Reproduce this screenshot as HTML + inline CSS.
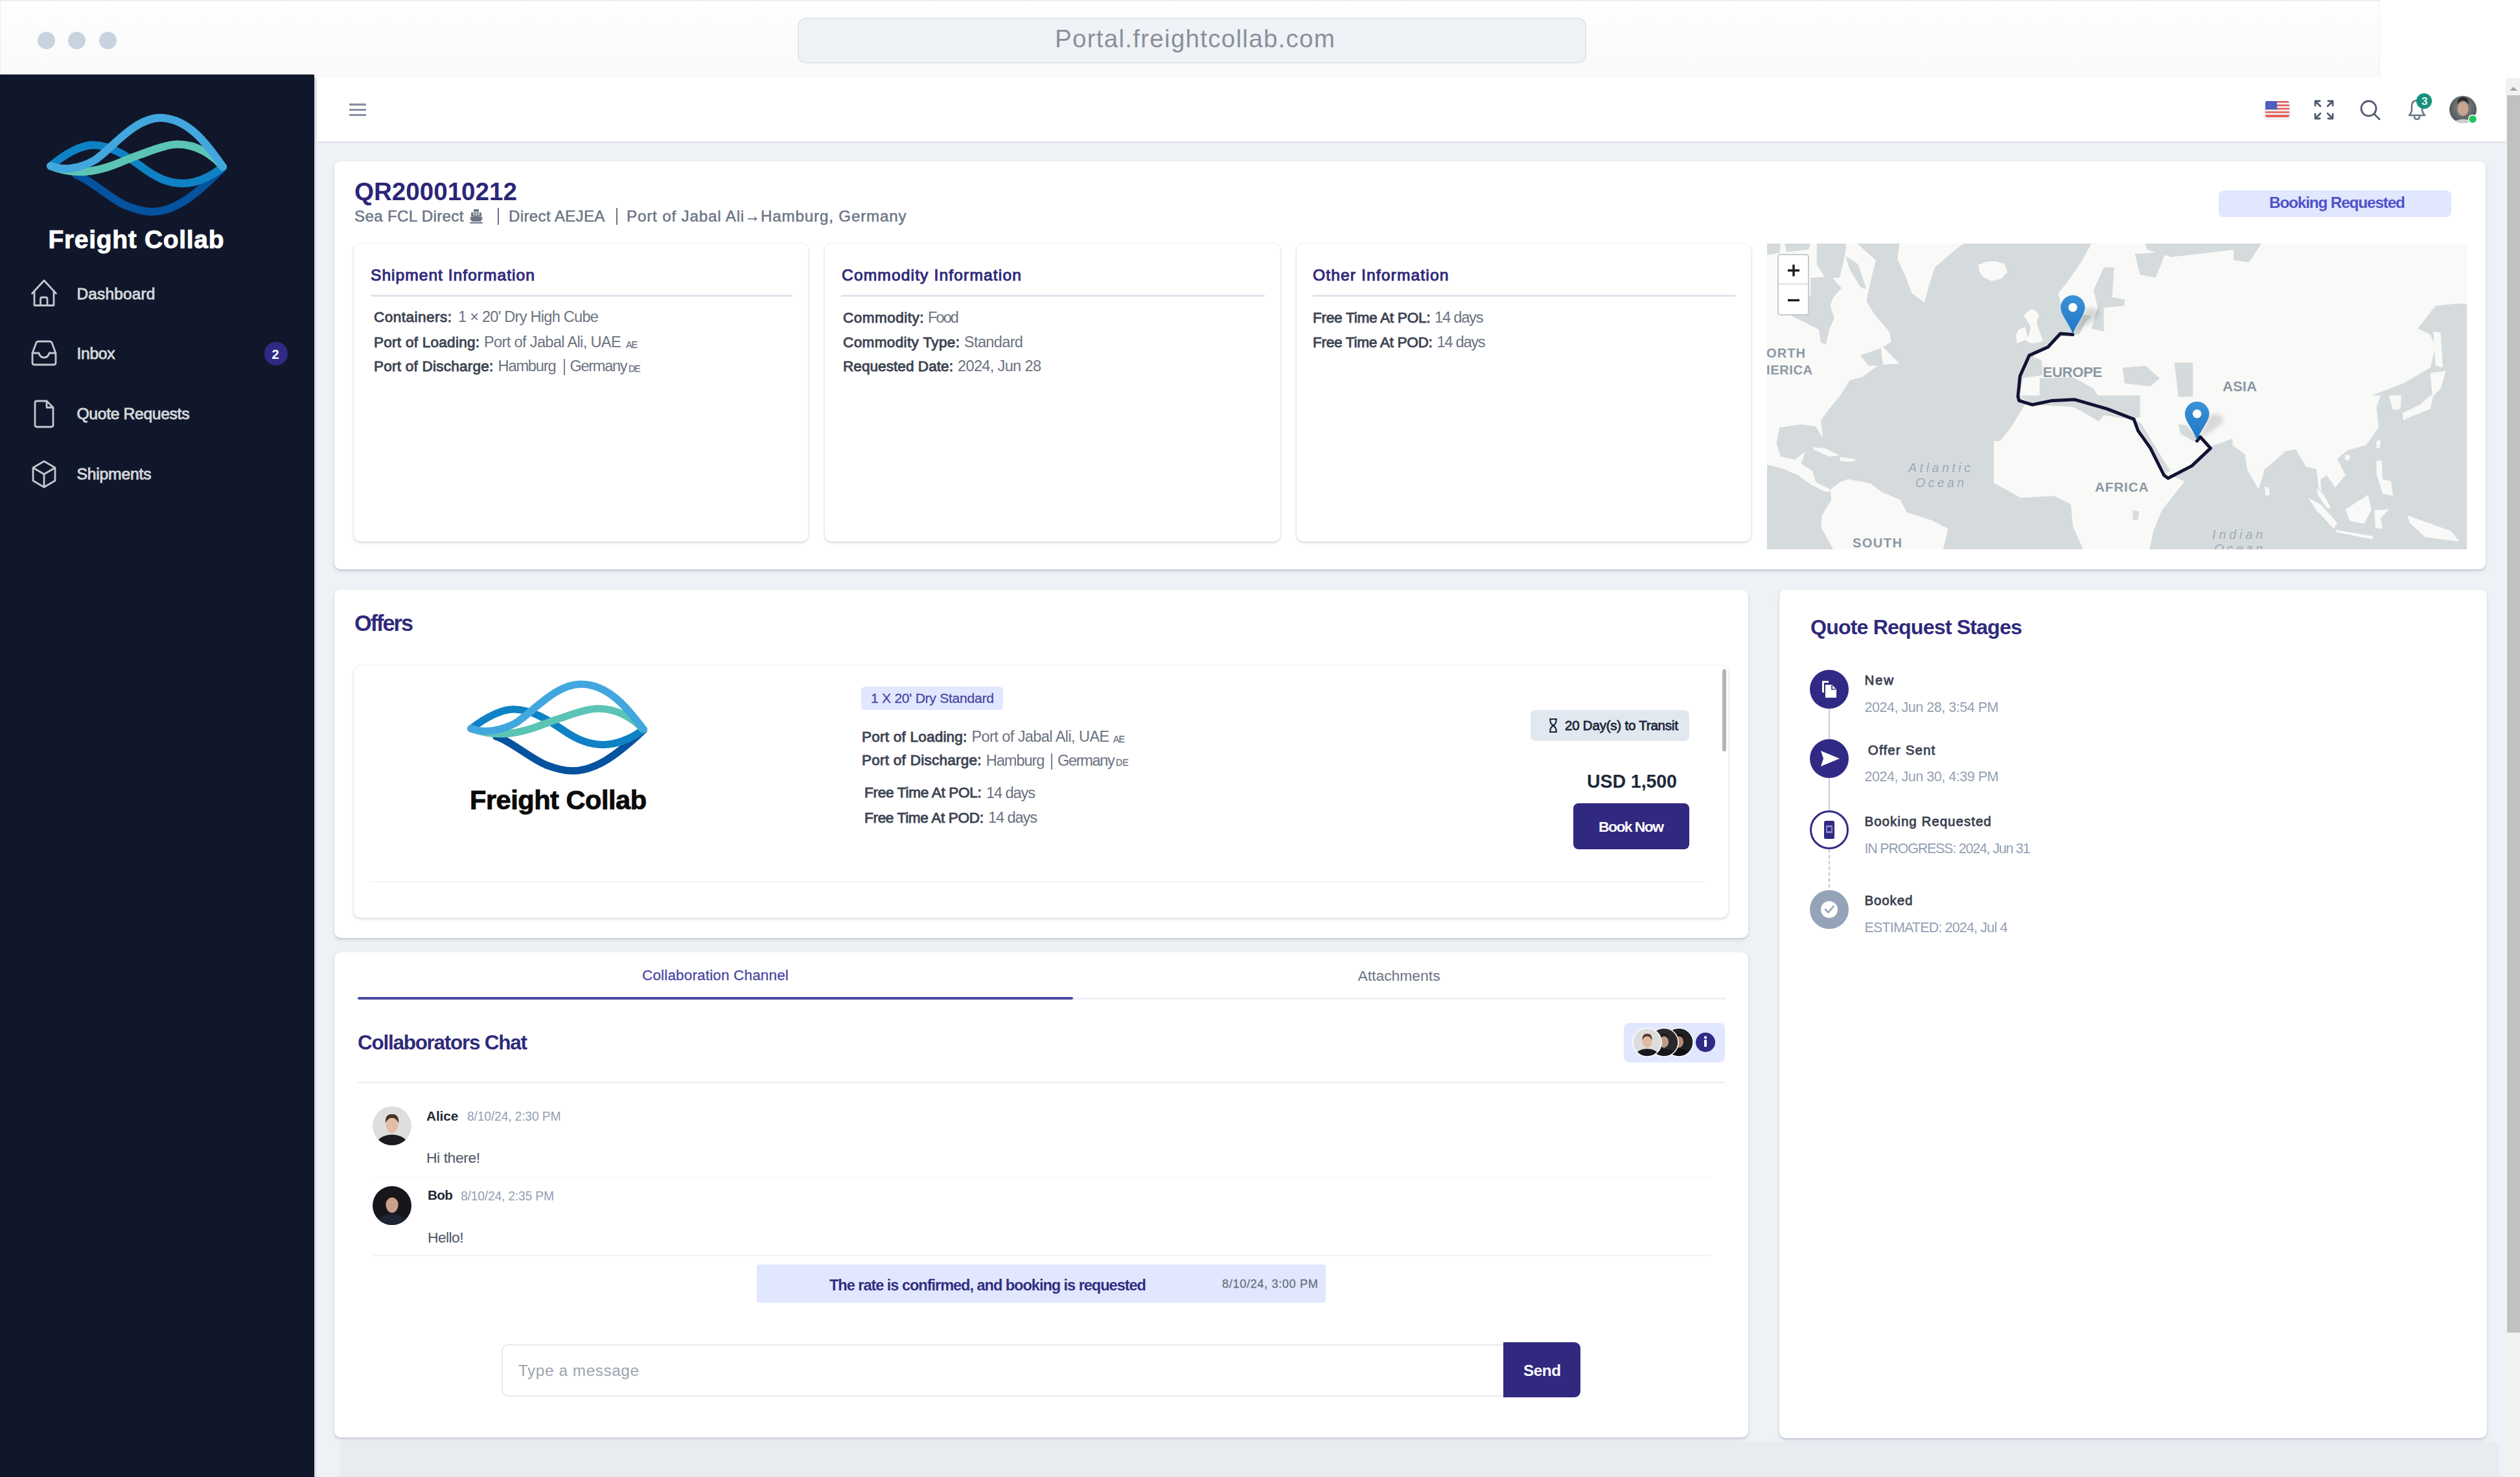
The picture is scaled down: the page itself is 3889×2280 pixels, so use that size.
<!DOCTYPE html>
<html><head><meta charset="utf-8"><title>Freight Collab</title>
<style>
html,body{margin:0;padding:0;width:3889px;height:2280px;overflow:hidden;background:#eef2f7;}
.t{position:absolute;white-space:nowrap;line-height:1;font-family:"Liberation Sans",sans-serif;}
.r{position:absolute;}
</style></head><body>
<div class="r" style="left:485.0px;top:120.0px;width:3382.0px;height:2160.0px;background:#eef2f7;"></div>
<div class="r" style="left:524.0px;top:2226.0px;width:3333.0px;height:54.0px;background:#e8ebf0;"></div>
<div class="r" style="left:0.0px;top:0.0px;width:3673.0px;height:120.0px;background:linear-gradient(180deg,#fefefe,#fafafb);border-top:2px solid #eceef1;border-left:1px solid #eef0f3;border-right:1px solid #eef0f3;box-sizing:border-box;"></div>
<div class="r" style="left:3673.0px;top:0.0px;width:216.0px;height:121.0px;background:#ffffff;"></div>
<div class="r" style="left:57.5px;top:48.5px;width:27.0px;height:27.0px;background:#c9d3e0;border-radius:50%;"></div>
<div class="r" style="left:104.5px;top:48.5px;width:27.0px;height:27.0px;background:#c9d3e0;border-radius:50%;"></div>
<div class="r" style="left:152.5px;top:48.5px;width:27.0px;height:27.0px;background:#c9d3e0;border-radius:50%;"></div>
<div class="r" style="left:1231.0px;top:27.0px;width:1217.0px;height:71.0px;background:#eff3f8;border:2px solid #e1e6ed;border-radius:13px;box-sizing:border-box;"></div>
<div class="t" style="left:1628.0px;top:41.2px;font-size:38.57px;color:#8b909a;letter-spacing:1.26px;">Portal.freightcollab.com</div>
<div class="r" style="left:3867.0px;top:121.0px;width:22.0px;height:2159.0px;background:#f1f1f1;"></div>
<div class="r" style="left:3869.0px;top:147.0px;width:20.0px;height:1910.0px;background:#c1c1c1;"></div>
<svg class="r" style="left:3869px;top:128px" width="20" height="16"><path d="M4 12 L10 6 L16 12 Z" fill="#a3a3a3"/></svg>
<div class="r" style="left:485.0px;top:120.0px;width:3382.0px;height:98.0px;background:#ffffff;"></div>
<div class="r" style="left:485.0px;top:218.0px;width:3382.0px;height:3.0px;background:#e3e8ef;"></div>
<div class="r" style="left:0.0px;top:115.0px;width:485.0px;height:2165.0px;background:#10172a;"></div>
<div class="r" style="left:485.0px;top:120.0px;width:4.0px;height:2160.0px;background:linear-gradient(90deg,#c9ccd2,#eef2f7);"></div>
<svg class="r" style="left:60px;top:160px" width="300" height="180" viewBox="0 0 2462 1477" preserveAspectRatio="none"><g fill="none" stroke-width="100" stroke-linecap="round">
<path d="M470,900 C650,960 900,1200 1100,1290 C1250,1350 1350,1370 1420,1370 C1700,1370 1950,1200 2330,810" stroke="#05529f" />
<path d="M150,790 C350,620 550,520 700,525 C900,530 1100,650 1300,800 C1500,950 1650,1010 1820,1010 C2050,1010 2250,870 2330,800" stroke="#0e82c5" />
<path d="M150,790 C300,850 450,870 600,860 C900,830 1100,700 1300,640 C1500,560 1650,515 1760,515 C2000,515 2200,650 2330,800" stroke="#5cc4b4" />
<path d="M150,790 C300,850 500,830 700,720 C900,600 1200,180 1540,180 C1900,180 2150,540 2330,800" stroke="#42a7de" />
</g></svg>
<div class="t" style="left:74.5px;top:349.9px;font-size:39.00px;color:#ffffff;font-weight:bold;letter-spacing:0.68px;-webkit-text-stroke:0.9px #fff;">Freight Collab</div>
<div class="t" style="left:118.5px;top:441.8px;font-size:24.40px;color:#d4d7dd;-webkit-text-stroke:0.9px #d4d7dd;letter-spacing:0.20px;">Dashboard</div>
<div class="t" style="left:118.5px;top:534.0px;font-size:24.69px;color:#d4d7dd;-webkit-text-stroke:0.9px #d4d7dd;letter-spacing:-0.35px;">Inbox</div>
<div class="t" style="left:118.5px;top:627.0px;font-size:24.69px;color:#d4d7dd;-webkit-text-stroke:0.9px #d4d7dd;letter-spacing:-0.34px;">Quote Requests</div>
<div class="t" style="left:118.5px;top:720.0px;font-size:24.69px;color:#d4d7dd;-webkit-text-stroke:0.9px #d4d7dd;letter-spacing:-0.20px;">Shipments</div>
<svg class="r" style="left:40px;top:420px" width="60" height="350" viewBox="40 420 60 350" fill="none" stroke="#c3c7ce" stroke-width="2.8" stroke-linejoin="round" stroke-linecap="round">
<path d="M49.5,453 L68,433 L86.5,453 M53,449 L53,471.5 L83,471.5 L83,449 M62.5,471.5 L62.5,461.5 Q62.5,459 65,459 L70.5,459 Q73,459 73,461.5 L73,471.5"/>
<path d="M50,545 L56,529 Q57,527 59.5,527 L76.5,527 Q79,527 80,529 L86,545 L86,560 Q86,563 83,563 L53,563 Q50,563 50,560 Z M50,545 L60,545 Q62,552 68,552 Q74,552 76,545 L86,545"/>
<path d="M54,622 Q54,619 57,619 L72,619 L82,629 L82,656 Q82,659 79,659 L57,659 Q54,659 54,656 Z M72,619 L72,629 L82,629"/>
<path d="M68,712 L85,722 L85,742 L68,752 L51,742 L51,722 Z M51,722 L68,732 L85,722 M68,732 L68,752"/>
</svg>
<div class="r" style="left:408.4px;top:528.4px;width:35.2px;height:35.2px;background:#2f2a85;border-radius:50%;"></div>
<div class="t" style="left:419.5px;top:537.0px;font-size:20.00px;color:#ffffff;font-weight:bold;">2</div>
<svg class="r" style="left:530px;top:150px" width="45" height="40" viewBox="530 150 45 40" stroke="#8591a2" stroke-width="3.2" stroke-linecap="butt"><path d="M539,161.3 H565 M539,169.5 H565 M539,177.5 H565"/></svg>
<svg class="r" style="left:3490px;top:150px" width="50" height="40" viewBox="3490 150 50 40">
<defs><clipPath id="fc"><rect x="3496" y="156" width="37" height="25" rx="3"/></clipPath></defs>
<rect x="3494" y="158" width="41" height="27" rx="4" fill="#000" opacity="0.06"/>
<g clip-path="url(#fc)"><rect x="3496" y="156" width="37" height="25" fill="#f4f4f6"/>
<rect x="3496" y="156" width="37" height="2.6" fill="#e45b5b"/><rect x="3496" y="161.3" width="37" height="2.6" fill="#e45b5b"/>
<rect x="3496" y="166.6" width="37" height="2.6" fill="#e45b5b"/><rect x="3496" y="171.9" width="37" height="2.6" fill="#e45b5b"/>
<rect x="3496" y="177.2" width="37" height="3.8" fill="#e45b5b"/><rect x="3496" y="156" width="18" height="13" fill="#4d5fbf"/></g></svg>
<svg class="r" style="left:3565px;top:148px" width="45" height="45" viewBox="3565 148 45 45" fill="none" stroke="#505c70" stroke-width="2.8" stroke-linecap="round" stroke-linejoin="round">
<path d="M3573,156 L3581,164 M3573,156 L3573,163 M3573,156 L3580,156"/>
<path d="M3600,156 L3592,164 M3600,156 L3600,163 M3600,156 L3593,156"/>
<path d="M3573,183 L3581,175 M3573,183 L3573,176 M3573,183 L3580,183"/>
<path d="M3600,183 L3592,175 M3600,183 L3600,176 M3600,183 L3593,183"/>
</svg>
<svg class="r" style="left:3635px;top:148px" width="45" height="45" viewBox="3635 148 45 45" fill="none" stroke="#505c70" stroke-width="2.8" stroke-linecap="round">
<circle cx="3655.5" cy="167.5" r="11.5"/><path d="M3664,176 L3672,184"/></svg>
<svg class="r" style="left:3705px;top:145px" width="60" height="50" viewBox="3705 145 60 50" fill="none" stroke="#6b7689" stroke-width="2.6" stroke-linecap="round" stroke-linejoin="round">
<path d="M3718,178 Q3722,174 3722,168 L3722,164 Q3722,155 3730,155 Q3738,155 3738,164 L3738,168 Q3738,174 3742,178 Z M3726,180 Q3726,184 3730,184 Q3734,184 3734,180"/>
</svg>
<div class="r" style="left:3729.0px;top:144.0px;width:24.0px;height:24.0px;background:#16917f;border-radius:50%;"></div>
<div class="t" style="left:3737.0px;top:147.9px;font-size:17.14px;color:#e8f5f2;font-weight:bold;">3</div>
<svg class="r" style="left:3775px;top:143px" width="52" height="52" viewBox="3775 143 52 52">
<defs><clipPath id="av"><circle cx="3801" cy="169" r="21"/></clipPath><radialGradient id="avg" cx="0.5" cy="0.45" r="0.6"><stop offset="0" stop-color="#8a8f92"/><stop offset="1" stop-color="#3d4144"/></radialGradient></defs>
<g clip-path="url(#av)"><rect x="3775" y="143" width="52" height="52" fill="url(#avg)"/>
<ellipse cx="3801" cy="168" rx="8.5" ry="11" fill="#c7a58f"/><path d="M3792,161 Q3793,150 3801,150 Q3810,150 3810,161 Q3806,155 3801,155 Q3796,155 3792,161 Z" fill="#2b2725"/>
<ellipse cx="3801" cy="193" rx="17" ry="9" fill="#c9d1d6"/></g>
<circle cx="3816" cy="184" r="6.5" fill="#22c55e" stroke="#fff" stroke-width="1.5"/></svg>
<div class="r" style="left:516.0px;top:249.0px;width:3320.0px;height:630.0px;background:#fff;border-radius:10px;box-shadow:0 2px 3px rgba(30,40,60,0.16),0 4px 8px rgba(30,40,60,0.06),0 0 1px rgba(30,40,60,0.08);"></div>
<div class="t" style="left:547.0px;top:277.2px;font-size:38.57px;color:#2b2679;font-weight:bold;">QR200010212</div>
<div class="t" style="left:547.0px;top:321.5px;font-size:24.14px;color:#6b7585;-webkit-text-stroke:0.5px #6b7585;letter-spacing:0.34px;">Sea FCL Direct</div>
<svg class="r" style="left:722px;top:322px" width="26" height="24" viewBox="0 0 26 24"><g fill="#6b7585">
<rect x="9" y="1" width="8" height="4" rx="1"/><path d="M5,6 H21 V13 L13,10 L5,13 Z"/><path d="M3,14 L13,10.5 L23,14 L20,20 H6 Z"/><rect x="3" y="21" width="20" height="2" rx="1"/></g>
<g fill="#fff"><rect x="8" y="7.5" width="2.5" height="2"/><rect x="12" y="7.5" width="2.5" height="2"/><rect x="16" y="7.5" width="2.5" height="2"/></g></svg>
<div class="r" style="left:767.5px;top:321.0px;width:2.5px;height:26.0px;background:#6b7585;"></div>
<div class="t" style="left:785.0px;top:321.5px;font-size:24.14px;color:#6b7585;-webkit-text-stroke:0.5px #6b7585;letter-spacing:0.33px;">Direct AEJEA</div>
<div class="r" style="left:950.5px;top:321.0px;width:2.5px;height:26.0px;background:#6b7585;"></div>
<div class="t" style="left:967.0px;top:321.5px;font-size:24.14px;color:#6b7585;-webkit-text-stroke:0.5px #6b7585;letter-spacing:0.85px;">Port of Jabal Ali→Hamburg, Germany</div>
<div class="r" style="left:3424.0px;top:294.0px;width:359.0px;height:41.0px;background:#e0e7ff;border-radius:8px;"></div>
<div class="t" style="left:3502.0px;top:301.4px;font-size:24.29px;color:#4f52c9;font-weight:bold;letter-spacing:-1.13px;">Booking Requested</div>
<div class="r" style="left:546.0px;top:376.0px;width:701.0px;height:460.0px;background:#fff;border-radius:10px;box-shadow:0 2px 4px rgba(30,40,60,0.15),0 0 3px rgba(30,40,60,0.10);"></div>
<div class="r" style="left:1273.0px;top:376.0px;width:703.0px;height:460.0px;background:#fff;border-radius:10px;box-shadow:0 2px 4px rgba(30,40,60,0.15),0 0 3px rgba(30,40,60,0.10);"></div>
<div class="r" style="left:2001.0px;top:376.0px;width:701.0px;height:460.0px;background:#fff;border-radius:10px;box-shadow:0 2px 4px rgba(30,40,60,0.15),0 0 3px rgba(30,40,60,0.10);"></div>
<div class="t" style="left:572.0px;top:412.6px;font-size:24.57px;color:#2e2a7a;-webkit-text-stroke:1.0px #2e2a7a;letter-spacing:1.02px;">Shipment Information</div>
<div class="r" style="left:572.0px;top:455.0px;width:651.0px;height:3.0px;background:#dfe5ee;"></div>
<div class="t" style="left:1299.0px;top:413.1px;font-size:24.57px;color:#2e2a7a;-webkit-text-stroke:1.0px #2e2a7a;letter-spacing:1.15px;">Commodity Information</div>
<div class="r" style="left:1298.0px;top:455.0px;width:654.0px;height:3.0px;background:#dfe5ee;"></div>
<div class="t" style="left:2026.0px;top:413.1px;font-size:24.57px;color:#2e2a7a;-webkit-text-stroke:1.0px #2e2a7a;letter-spacing:1.14px;">Other Information</div>
<div class="r" style="left:2026.0px;top:455.0px;width:652.0px;height:3.0px;background:#dfe5ee;"></div>
<div class="t" style="left:577.0px;top:478.8px;font-size:22.54px;color:#3d4452;-webkit-text-stroke:0.9px #3d4452;letter-spacing:0.47px;">Containers:</div>
<div class="t" style="left:707.0px;top:478.0px;font-size:23.57px;color:#6b7280;letter-spacing:-0.74px;">1 × 20' Dry High Cube</div>
<div class="t" style="left:577.0px;top:517.8px;font-size:22.54px;color:#3d4452;-webkit-text-stroke:0.9px #3d4452;letter-spacing:0.26px;">Port of Loading:</div>
<div class="t" style="left:747.0px;top:517.0px;font-size:23.57px;color:#6b7280;letter-spacing:-0.65px;">Port of Jabal Ali, UAE</div>
<div class="t" style="left:966.0px;top:524.9px;font-size:14.27px;color:#6b7280;-webkit-text-stroke:0.3px #6b7280;letter-spacing:-1.04px;">AE</div>
<div class="t" style="left:577.0px;top:554.8px;font-size:22.54px;color:#3d4452;-webkit-text-stroke:0.9px #3d4452;letter-spacing:0.23px;">Port of Discharge:</div>
<div class="t" style="left:768.6px;top:554.0px;font-size:23.57px;color:#6b7280;letter-spacing:-1.16px;">Hamburg</div>
<div class="r" style="left:869.5px;top:554.0px;width:2.0px;height:25.0px;background:#7b8290;"></div>
<div class="t" style="left:879.4px;top:554.0px;font-size:23.57px;color:#6b7280;letter-spacing:-1.29px;">Germany</div>
<div class="t" style="left:970.0px;top:561.9px;font-size:14.23px;color:#6b7280;-webkit-text-stroke:0.3px #6b7280;letter-spacing:-1.17px;">DE</div>
<div class="t" style="left:1301.0px;top:479.8px;font-size:22.54px;color:#3d4452;-webkit-text-stroke:0.9px #3d4452;letter-spacing:0.47px;">Commodity:</div>
<div class="t" style="left:1432.0px;top:479.0px;font-size:23.57px;color:#6b7280;letter-spacing:-1.91px;">Food</div>
<div class="t" style="left:1301.0px;top:517.8px;font-size:22.54px;color:#3d4452;-webkit-text-stroke:0.9px #3d4452;letter-spacing:0.36px;">Commodity Type:</div>
<div class="t" style="left:1488.0px;top:517.0px;font-size:23.57px;color:#6b7280;letter-spacing:-0.67px;">Standard</div>
<div class="t" style="left:1301.0px;top:554.8px;font-size:22.54px;color:#3d4452;-webkit-text-stroke:0.9px #3d4452;letter-spacing:0.06px;">Requested Date:</div>
<div class="t" style="left:1478.0px;top:554.0px;font-size:23.57px;color:#6b7280;letter-spacing:-0.66px;">2024, Jun 28</div>
<div class="t" style="left:2026.0px;top:479.8px;font-size:22.54px;color:#3d4452;-webkit-text-stroke:0.9px #3d4452;letter-spacing:-0.24px;">Free Time At POL:</div>
<div class="t" style="left:2214.0px;top:479.0px;font-size:23.57px;color:#6b7280;letter-spacing:-1.18px;">14 days</div>
<div class="t" style="left:2026.0px;top:517.8px;font-size:22.54px;color:#3d4452;-webkit-text-stroke:0.9px #3d4452;letter-spacing:-0.27px;">Free Time At POD:</div>
<div class="t" style="left:2217.5px;top:517.0px;font-size:23.57px;color:#6b7280;letter-spacing:-1.23px;">14 days</div>
<svg class="r" style="left:2727px;top:376px" width="1080" height="472" viewBox="0 0 1080 472">
<defs><linearGradient id="pg" x1="0" y1="0" x2="0" y2="1"><stop offset="0" stop-color="#3d93d8"/><stop offset="1" stop-color="#1c74c6"/></linearGradient>
<filter id="blr" x="-50%" y="-50%" width="200%" height="200%"><feGaussianBlur stdDeviation="3"/></filter></defs>
<rect width="1080" height="472" fill="#d5dadd"/>
<polygon points="0.0,0.0 76.7,0.0 76.7,32.0 89.5,52.7 111.9,52.7 121.4,12.8 121.4,0.0 139.0,0.0 167.8,25.6 156.6,71.9 153.4,89.5 167.8,111.9 188.6,135.8 191.8,151.8 179.0,159.8 204.5,185.4 172.6,187.0 147.0,206.1 127.8,210.9 111.9,236.0 0.0,236.0" fill="#f9f9f7"/><polygon points="67.1,52.7 99.1,51.1 115.1,68.7 102.3,83.1 97.5,95.9 103.9,115.1 95.9,132.6 91.1,155.0 83.1,153.4 79.9,132.6 63.9,124.6 38.4,111.9 52.7,95.9 67.1,79.9" fill="#d5dadd"/><polygon points="143.8,172.6 175.8,161.4 179.0,188.6 156.6,188.6" fill="#d5dadd"/><polygon points="0.0,0.0 20.8,0.0 19.2,14.4 0.0,17.6" fill="#d5dadd"/><polygon points="27.2,0.0 67.1,0.0 63.9,9.6 30.4,12.8" fill="#d5dadd"/><polygon points="121.4,19.2 140.6,32.0 153.4,70.3 143.8,67.1 127.8,39.9" fill="#d5dadd"/><polygon points="204.5,0.0 303.6,0.0 292.4,8.0 258.9,36.8 249.3,67.1 242.9,91.1 223.7,76.7 212.5,47.9 201.3,24.0" fill="#f9f9f7"/><polygon points="0.0,236.0 111.9,236.0 95.9,255.2 83.1,272.8 86.3,299.9 75.1,282.3 52.7,279.1 19.2,283.9 14.4,307.9 20.8,328.7 43.1,333.5 59.1,320.7 52.7,339.9 70.3,351.1 75.1,368.6 95.9,378.2 97.5,383.0 89.5,383.0 67.1,371.8 47.9,357.4 20.8,346.3 0.0,341.5" fill="#f9f9f7"/><polygon points="70.3,314.3 89.5,315.9 111.9,327.1 95.9,328.7 73.5,319.1" fill="#f9f9f7"/><polygon points="111.9,329.5 137.4,332.7 132.6,336.7 113.5,335.9" fill="#f9f9f7"/><polygon points="97.5,379.8 111.9,368.6 124.6,363.8 159.8,370.2 175.8,383.0 206.1,395.8 215.7,415.0 255.7,427.8 279.6,440.5 271.7,472.5 102.3,472.5 83.1,437.3 84.7,419.8 99.1,395.8" fill="#f9f9f7"/><rect x="350" y="0" width="370" height="472" fill="#f9f9f7"/><polygon points="345.6,0.0 500.6,0.0 484.6,28.8 462.3,60.7 449.5,76.7 455.9,102.3 500.6,111.9 491.0,121.4 481.4,140.6 449.5,143.8 428.7,159.8 407.9,169.4 412.7,175.8 423.9,180.6 425.5,202.9 395.2,207.7 388.8,236.5 345.6,236.5" fill="#d5dadd"/><polygon points="503.8,71.9 519.8,36.8 535.8,36.8 532.6,83.1 551.8,86.3 551.8,95.9 519.8,99.1 519.8,135.8 500.6,131.0 510.2,99.1" fill="#d5dadd"/><polygon points="567.7,16.0 615.7,12.8 599.7,52.7 575.7,47.9" fill="#d5dadd"/><polygon points="583.7,0.0 721.1,0.0 721.1,9.6 623.7,20.8 586.9,9.6" fill="#d5dadd"/><polygon points="420.7,207.7 471.9,206.1 503.8,223.7 511.8,236.5 420.7,236.5" fill="#d5dadd"/><polygon points="548.6,191.8 583.7,188.6 606.1,207.7 591.7,220.5 551.8,215.7" fill="#d5dadd"/><polygon points="628.5,183.8 657.2,183.8 657.2,236.5 634.8,236.5" fill="#d5dadd"/><polygon points="326.0,33.0 338.0,28.0 352.0,27.0 366.0,31.0 371.0,44.0 362.0,54.0 347.0,58.0 334.0,52.0 328.0,44.0" fill="#f9f9f7"/><polygon points="407.0,101.0 414.0,103.0 420.0,111.0 416.0,122.0 418.0,129.0 426.0,150.0 418.0,153.0 407.0,154.0 398.5,149.0 405.0,138.0 407.0,129.0 401.0,118.0 396.0,111.0" fill="#f9f9f7"/><polygon points="388.0,133.0 398.5,128.6 401.0,140.0 400.7,147.8 386.0,154.0 384.0,142.0" fill="#f9f9f7"/><polygon points="345.6,234.4 388.8,234.4 399.9,245.6 376.0,283.9 360.0,304.7 345.6,304.7" fill="#d5dadd"/><polygon points="345.6,367.0 392.0,392.6 443.1,389.4 468.7,402.2 471.9,435.7 487.8,472.5 345.6,472.5" fill="#d5dadd"/><polygon points="388.8,234.4 575.7,234.4 575.7,268.0 559.7,271.2 519.8,264.8 511.8,274.4 487.8,260.0 471.9,252.0 407.9,248.8 399.9,242.4" fill="#d5dadd"/><polygon points="567.7,272.8 577.3,277.5 622.1,351.1 615.7,354.2" fill="#d5dadd"/><polygon points="634.8,279.1 647.6,280.7 666.8,303.1 660.4,306.3 638.0,293.5" fill="#d5dadd"/><polygon points="622.1,357.4 655.6,344.7 686.0,312.7 721.1,299.9 721.1,472.5 590.1,472.5 596.5,443.7 609.3,411.8 644.4,367.0" fill="#d5dadd"/><polygon points="564.5,411.8 574.1,413.4 572.5,426.2 564.5,426.2" fill="#d5dadd"/><rect x="720" y="0" width="360" height="236" fill="#f9f9f7"/><polygon points="1063.6,92.7 1081.1,92.7 1081.1,236.5 927.7,236.5 982.1,215.7 1023.6,191.8 1031.6,159.8 1023.6,140.6 1004.4,131.0 1031.6,95.9" fill="#d5dadd"/><polygon points="1028.4,135.8 1039.6,137.4 1042.8,191.8 1031.6,188.6" fill="#f9f9f7"/><polygon points="1023.6,199.7 1047.6,196.5 1039.6,223.7 1026.8,236.5" fill="#f9f9f7"/><polygon points="720.0,0.0 763.1,0.0 744.0,28.8 720.0,25.6" fill="#d5dadd"/><rect x="720" y="236" width="360" height="236" fill="#d5dadd"/><polygon points="718.4,234.4 946.9,234.4 940.5,252.0 943.7,283.9 924.5,311.1 895.8,319.1 879.8,331.9 892.6,357.4 876.6,376.6 863.8,357.4 854.2,363.8 855.8,387.8 870.2,408.6 863.8,395.8 851.0,376.6 847.8,347.9 831.9,344.7 815.9,317.5 799.9,320.7 772.7,344.7 767.9,347.9 758.4,379.8 740.8,347.9 737.6,325.5 718.4,311.1" fill="#f9f9f7"/><polygon points="959.7,234.4 978.9,234.4 977.3,255.2 966.1,256.8" fill="#f9f9f7"/><polygon points="982.1,272.8 980.5,261.6 1007.6,248.8 1023.6,234.4 1028.4,234.4 1023.6,255.2 991.7,268.0" fill="#f9f9f7"/><polygon points="940.5,304.7 946.9,303.1 945.3,315.9 940.5,315.9" fill="#f9f9f7"/><polygon points="767.9,375.0 774.3,376.6 775.9,387.8 769.5,389.4" fill="#f9f9f7"/><polygon points="835.1,392.6 855.8,403.8 879.8,431.0 875.0,440.5 847.8,411.8" fill="#f9f9f7"/><polygon points="878.2,442.1 935.7,451.7 934.1,456.5 878.2,445.3" fill="#f9f9f7"/><polygon points="892.6,410.2 927.7,387.8 932.5,411.8 921.3,432.5 899.0,427.8" fill="#f9f9f7"/><polygon points="937.3,411.8 959.7,410.2 946.9,424.6 950.1,440.5 938.9,438.9" fill="#f9f9f7"/><polygon points="940.5,335.1 948.5,335.1 950.1,363.8 962.9,367.0 966.1,389.4 950.1,386.2 940.5,355.8" fill="#f9f9f7"/><polygon points="988.5,419.8 1055.6,443.7 1068.4,459.7 1015.6,453.3 991.7,431.0" fill="#f9f9f7"/><polygon points="892.6,325.5 900.6,327.1 897.4,335.1 891.8,333.5" fill="#f9f9f7"/><polygon points="847.8,376.6 859.0,387.8 870.2,408.6 863.8,408.6 851.0,389.4" fill="#f9f9f7"/>
<text x="-1" y="176" textLength="60" lengthAdjust="spacing" font-family="Liberation Sans" font-weight="bold" font-size="20.1" fill="#8b97a4" stroke="#ffffff" stroke-opacity="0.35" stroke-width="1" paint-order="stroke">ORTH</text><text x="-1" y="202" textLength="71" lengthAdjust="spacing" font-family="Liberation Sans" font-weight="bold" font-size="20.1" fill="#8b97a4" stroke="#ffffff" stroke-opacity="0.35" stroke-width="1" paint-order="stroke">IERICA</text><text x="425.5" y="206" textLength="91.89999999999998" lengthAdjust="spacing" font-family="Liberation Sans" font-weight="bold" font-size="22.2" fill="#8b97a4" stroke="#ffffff" stroke-opacity="0.35" stroke-width="1" paint-order="stroke">EUROPE</text><text x="703" y="228" textLength="53" lengthAdjust="spacing" font-family="Liberation Sans" font-weight="bold" font-size="22.2" fill="#8b97a4" stroke="#ffffff" stroke-opacity="0.35" stroke-width="1" paint-order="stroke">ASIA</text><text x="506" y="383" textLength="82.5" lengthAdjust="spacing" font-family="Liberation Sans" font-weight="bold" font-size="20.8" fill="#8b97a4" stroke="#ffffff" stroke-opacity="0.35" stroke-width="1" paint-order="stroke">AFRICA</text><text x="132" y="469" textLength="76" lengthAdjust="spacing" font-family="Liberation Sans" font-weight="bold" font-size="20.1" fill="#8b97a4" stroke="#ffffff" stroke-opacity="0.35" stroke-width="1" paint-order="stroke">SOUTH</text><text x="218" y="352.6" textLength="96" lengthAdjust="spacing" font-family="Liberation Sans" font-weight="normal" font-style="italic" font-size="19.4" fill="#9ba6b2" stroke="#ffffff" stroke-opacity="0.35" stroke-width="1" paint-order="stroke">Atlantic</text><text x="229" y="376" textLength="75" lengthAdjust="spacing" font-family="Liberation Sans" font-weight="normal" font-style="italic" font-size="19.4" fill="#9ba6b2" stroke="#ffffff" stroke-opacity="0.35" stroke-width="1" paint-order="stroke">Ocean</text><text x="687" y="456" textLength="78" lengthAdjust="spacing" font-family="Liberation Sans" font-weight="normal" font-style="italic" font-size="19.4" fill="#9ba6b2" stroke="#ffffff" stroke-opacity="0.35" stroke-width="1" paint-order="stroke">Indian</text><text x="690" y="478" textLength="75" lengthAdjust="spacing" font-family="Liberation Sans" font-weight="normal" font-style="italic" font-size="19.4" fill="#9ba6b2" stroke="#ffffff" stroke-opacity="0.35" stroke-width="1" paint-order="stroke">Ocean</text>
<polyline points="471.9,140.6 452.7,139.0 433.5,159.8 404.7,172.6 390.4,204.5 387.2,236.0 388.8,242.4 409.5,248.8 439.9,242.4 475.0,240.8 524.6,255.2 566.1,271.2 572.5,288.7 591.7,315.9 612.5,357.4 618.9,362.2 655.6,343.1 684.4,315.9 668.4,298.3 663.6,304.7" fill="none" stroke="#131334" stroke-width="5" stroke-linejoin="round" stroke-linecap="round"/>
<path d="M473.9,138.6 C483.9,130.6 501.9,122.6 511.9,110.6 C515.9,100.6 501.9,96.6 491.9,100.6 Z" fill="#000" opacity="0.13" filter="url(#blr)"/>
<path d="M471.9,140.6 C468.9,126.6 453.09999999999997,110.6 453.09999999999997,98.6 A18.8,18.8 0 1 1 490.7,98.6 C490.7,110.6 474.9,126.6 471.9,140.6 Z" fill="url(#pg)"/>
<circle cx="471.9" cy="98.6" r="6.8" fill="#fff"/><path d="M665.6,302.7 C675.6,294.7 693.6,286.7 703.6,274.7 C707.6,264.7 693.6,260.7 683.6,264.7 Z" fill="#000" opacity="0.13" filter="url(#blr)"/>
<path d="M663.6,304.7 C660.6,290.7 644.8000000000001,274.7 644.8000000000001,262.7 A18.8,18.8 0 1 1 682.4,262.7 C682.4,274.7 666.6,290.7 663.6,304.7 Z" fill="url(#pg)"/>
<circle cx="663.6" cy="262.7" r="6.8" fill="#fff"/>
<rect x="17" y="17" width="47" height="93" rx="4" fill="#fff" stroke="#c9cbcd" stroke-width="2"/>
<line x1="18" y1="62.5" x2="63" y2="62.5" stroke="#d5d5d5" stroke-width="1.5"/>
<path d="M32,41.5 H50 M41,32.5 V50.5" stroke="#1a1a1a" stroke-width="3.4"/>
<path d="M32,87.5 H50" stroke="#1a1a1a" stroke-width="3.4"/>
</svg>
<div class="r" style="left:516.0px;top:910.0px;width:2182.0px;height:538.0px;background:#fff;border-radius:10px;box-shadow:0 2px 3px rgba(30,40,60,0.16),0 4px 8px rgba(30,40,60,0.06),0 0 1px rgba(30,40,60,0.08);"></div>
<div class="t" style="left:547.0px;top:944.9px;font-size:34.29px;color:#2e2a7a;font-weight:bold;letter-spacing:-2.00px;">Offers</div>
<div class="r" style="left:546.0px;top:1028.0px;width:2121.0px;height:389.0px;background:#fff;border-radius:10px;box-shadow:0 2px 4px rgba(30,40,60,0.15),0 0 3px rgba(30,40,60,0.10);"></div>
<svg class="r" style="left:708.6px;top:1035.9px" width="300" height="166" viewBox="0 0 2462 1477" preserveAspectRatio="none"><g fill="none" stroke-width="100" stroke-linecap="round">
<path d="M470,900 C650,960 900,1200 1100,1290 C1250,1350 1350,1370 1420,1370 C1700,1370 1950,1200 2330,810" stroke="#05529f" />
<path d="M150,790 C350,620 550,520 700,525 C900,530 1100,650 1300,800 C1500,950 1650,1010 1820,1010 C2050,1010 2250,870 2330,800" stroke="#0e82c5" />
<path d="M150,790 C300,850 450,870 600,860 C900,830 1100,700 1300,640 C1500,560 1650,515 1760,515 C2000,515 2200,650 2330,800" stroke="#5cc4b4" />
<path d="M150,790 C300,850 500,830 700,720 C900,600 1200,180 1540,180 C1900,180 2150,540 2330,800" stroke="#42a7de" />
</g></svg>
<div class="t" style="left:725.0px;top:1213.8px;font-size:41.43px;color:#0a0a0a;font-weight:bold;letter-spacing:-0.42px;-webkit-text-stroke:0.9px #0a0a0a;">Freight Collab</div>
<div class="r" style="left:571.0px;top:1360.0px;width:706.0px;height:2.0px;background:#f1f3f6;"></div>
<div class="r" style="left:1277.0px;top:1360.0px;width:1353.0px;height:2.0px;background:#f1f3f6;"></div>
<div class="r" style="left:1329.0px;top:1060.0px;width:219.0px;height:36.0px;background:#e0e7ff;border-radius:6px;"></div>
<div class="t" style="left:1344.0px;top:1067.1px;font-size:21.09px;color:#4a47a3;-webkit-text-stroke:0.3px #4a47a3;letter-spacing:-0.27px;">1 X 20' Dry Standard</div>
<div class="t" style="left:1330.0px;top:1126.8px;font-size:22.54px;color:#3d4452;-webkit-text-stroke:0.9px #3d4452;letter-spacing:0.22px;">Port of Loading:</div>
<div class="t" style="left:1499.4px;top:1126.0px;font-size:23.57px;color:#6b7280;letter-spacing:-0.59px;">Port of Jabal Ali, UAE</div>
<div class="t" style="left:1718.0px;top:1133.9px;font-size:14.23px;color:#6b7280;-webkit-text-stroke:0.3px #6b7280;letter-spacing:-0.98px;">AE</div>
<div class="t" style="left:1330.0px;top:1163.3px;font-size:22.54px;color:#3d4452;-webkit-text-stroke:0.9px #3d4452;letter-spacing:0.25px;">Port of Discharge:</div>
<div class="t" style="left:1521.7px;top:1162.5px;font-size:23.57px;color:#6b7280;letter-spacing:-1.02px;">Hamburg</div>
<div class="r" style="left:1621.5px;top:1163.0px;width:2.0px;height:25.0px;background:#7b8290;"></div>
<div class="t" style="left:1632.0px;top:1162.5px;font-size:23.57px;color:#6b7280;letter-spacing:-1.36px;">Germany</div>
<div class="t" style="left:1722.0px;top:1170.4px;font-size:14.23px;color:#6b7280;-webkit-text-stroke:0.3px #6b7280;letter-spacing:-0.07px;">DE</div>
<div class="t" style="left:1334.0px;top:1213.3px;font-size:22.54px;color:#3d4452;-webkit-text-stroke:0.9px #3d4452;letter-spacing:-0.28px;">Free Time At POL:</div>
<div class="t" style="left:1522.0px;top:1212.5px;font-size:23.57px;color:#6b7280;letter-spacing:-1.09px;">14 days</div>
<div class="t" style="left:1334.0px;top:1251.8px;font-size:22.54px;color:#3d4452;-webkit-text-stroke:0.9px #3d4452;letter-spacing:-0.32px;">Free Time At POD:</div>
<div class="t" style="left:1525.0px;top:1251.0px;font-size:23.57px;color:#6b7280;letter-spacing:-1.09px;">14 days</div>
<div class="r" style="left:2658.0px;top:1033.0px;width:6.0px;height:127.0px;background:#b5b5b5;border-radius:3px;"></div>
<div class="r" style="left:2362.0px;top:1096.0px;width:245.0px;height:48.0px;background:#e2e8f0;border-radius:8px;"></div>
<svg class="r" style="left:2388px;top:1108px" width="18" height="24" viewBox="0 0 18 24" fill="none" stroke="#1e293b" stroke-width="2.2" stroke-linejoin="round"><path d="M3,2 H15 M3,22 H15 M4.5,2 V5 Q4.5,9 9,12 Q13.5,9 13.5,5 V2 M4.5,22 V19 Q4.5,15 9,12 Q13.5,15 13.5,19 V22"/></svg>
<div class="t" style="left:2415.0px;top:1109.6px;font-size:20.51px;color:#1e293b;-webkit-text-stroke:0.8px #1e293b;letter-spacing:-0.21px;">20 Day(s) to Transit</div>
<div class="t" style="left:2449.0px;top:1191.7px;font-size:28.57px;color:#1e293b;font-weight:bold;letter-spacing:-0.10px;">USD 1,500</div>
<div class="r" style="left:2428.0px;top:1240.0px;width:179.0px;height:71.0px;background:#30297f;border-radius:8px;"></div>
<div class="t" style="left:2467.0px;top:1264.6px;font-size:22.86px;color:#ffffff;font-weight:bold;letter-spacing:-1.53px;">Book Now</div>
<div class="r" style="left:2746.0px;top:910.0px;width:1092.0px;height:1310.0px;background:#fff;border-radius:10px;box-shadow:0 2px 3px rgba(30,40,60,0.16),0 4px 8px rgba(30,40,60,0.06),0 0 1px rgba(30,40,60,0.08);"></div>
<div class="t" style="left:2794.0px;top:952.2px;font-size:32.14px;color:#2e2a7a;font-weight:bold;letter-spacing:-0.84px;">Quote Request Stages</div>
<div class="r" style="left:2821.8px;top:1094.0px;width:2.5px;height:47.0px;background:#c5cbdc;"></div>
<div class="r" style="left:2821.8px;top:1201.0px;width:2.5px;height:50.0px;background:#c5cbdc;"></div>
<svg class="r" style="left:2821px;top:1311px" width="4" height="64"><line x1="2" y1="0" x2="2" y2="64" stroke="#c5cbdc" stroke-width="2.5" stroke-dasharray="5 4"/></svg>
<svg class="r" style="left:2791px;top:1032px" width="64" height="404" viewBox="2791 1032 64 404">
<circle cx="2823" cy="1064" r="30" fill="#312a84"/>
<g fill="#fff"><path d="M2812,1051 h10 v3 h-7 v15 h-3 Z"/><path d="M2817,1057 h10 l7,7 v13 h-17 Z"/></g>
<path d="M2827,1058 v6 h6" fill="none" stroke="#312a84" stroke-width="1.6"/>
<circle cx="2823" cy="1171" r="30" fill="#312a84"/>
<path d="M2810,1159 L2839,1171 L2810,1183 L2814,1171 Z" fill="#fff"/>
<circle cx="2823" cy="1281" r="28.5" fill="#fff" stroke="#312a84" stroke-width="3"/>
<rect x="2815" y="1267" width="16" height="28" rx="2.5" fill="#312a84"/>
<rect x="2818" y="1274" width="10" height="12" fill="#8a86c4"/><rect x="2820" y="1277" width="6" height="6" fill="#312a84"/>
<circle cx="2823" cy="1404" r="30" fill="#94a3b8"/>
<circle cx="2823" cy="1404" r="13" fill="#fff"/>
<path d="M2817,1404 L2821.5,1408.5 L2829.5,1399" fill="none" stroke="#94a3b8" stroke-width="2.6" stroke-linecap="round" stroke-linejoin="round"/>
</svg>
<div class="t" style="left:2877.5px;top:1040.1px;font-size:20.51px;color:#3a4150;-webkit-text-stroke:0.8px #3a4150;letter-spacing:1.73px;">New</div>
<div class="t" style="left:2877.5px;top:1082.3px;font-size:21.43px;color:#94a0b4;letter-spacing:-0.43px;">2024, Jun 28, 3:54 PM</div>
<div class="t" style="left:2882.8px;top:1147.6px;font-size:20.51px;color:#3a4150;-webkit-text-stroke:0.8px #3a4150;letter-spacing:1.16px;">Offer Sent</div>
<div class="t" style="left:2877.5px;top:1188.8px;font-size:21.43px;color:#94a0b4;letter-spacing:-0.43px;">2024, Jun 30, 4:39 PM</div>
<div class="t" style="left:2877.5px;top:1257.6px;font-size:20.51px;color:#3a4150;-webkit-text-stroke:0.8px #3a4150;letter-spacing:1.02px;">Booking Requested</div>
<div class="t" style="left:2877.5px;top:1299.8px;font-size:21.43px;color:#94a0b4;letter-spacing:-1.19px;">IN PROGRESS: 2024, Jun 31</div>
<div class="t" style="left:2877.5px;top:1379.6px;font-size:20.51px;color:#3a4150;-webkit-text-stroke:0.8px #3a4150;letter-spacing:0.88px;">Booked</div>
<div class="t" style="left:2877.5px;top:1421.8px;font-size:21.43px;color:#94a0b4;letter-spacing:-0.80px;">ESTIMATED: 2024, Jul 4</div>
<div class="r" style="left:516.0px;top:1470.0px;width:2182.0px;height:749.0px;background:#fff;border-radius:10px;box-shadow:0 2px 3px rgba(30,40,60,0.16),0 4px 8px rgba(30,40,60,0.06),0 0 1px rgba(30,40,60,0.08);"></div>
<div class="t" style="left:991.0px;top:1494.9px;font-size:22.51px;color:#4a47a3;-webkit-text-stroke:0.3px #4a47a3;letter-spacing:0.16px;">Collaboration Channel</div>
<div class="t" style="left:2095.5px;top:1494.6px;font-size:22.86px;color:#6b7280;">Attachments</div>
<div class="r" style="left:552.0px;top:1539.5px;width:2111.0px;height:3.0px;background:#eef0f4;"></div>
<div class="r" style="left:552.0px;top:1539.0px;width:1104.0px;height:4.0px;background:#4c4a9e;border-radius:2px;"></div>
<div class="t" style="left:552.0px;top:1594.3px;font-size:31.43px;color:#2e2a7a;font-weight:bold;letter-spacing:-1.23px;">Collaborators Chat</div>
<div class="r" style="left:552.0px;top:1670.0px;width:2111.0px;height:2.0px;background:#eceef2;"></div>
<div class="r" style="left:2506.0px;top:1579.0px;width:156.0px;height:61.0px;background:#e0e7ff;border-radius:8px;"></div>
<svg class="r" style="left:2567px;top:1585px" width="48" height="48" viewBox="2567 1585 48 48">
<defs><clipPath id="ga3"><circle cx="2591" cy="1609" r="22"/></clipPath></defs>
<g clip-path="url(#ga3)"><rect x="2569" y="1587" width="44" height="44" fill="#1f1f24"/>
<ellipse cx="2591" cy="1629.9" rx="17.6" ry="11.0" fill="#0f0f14"/>
<ellipse cx="2591" cy="1607.9" rx="7.04" ry="9.24" fill="#b48b76"/>
<path d="M2583.52,1605.7 Q2583.08,1595.36 2591,1595.8 Q2598.92,1595.36 2598.48,1605.7 Q2595.4,1599.76 2591,1599.76 Q2586.6,1599.76 2583.52,1605.7 Z" fill="#1a1410"/>
</g><circle cx="2591" cy="1609" r="22" fill="none" stroke="#fff" stroke-width="1.5"/></svg>
<svg class="r" style="left:2544px;top:1585px" width="48" height="48" viewBox="2544 1585 48 48">
<defs><clipPath id="ga2"><circle cx="2568" cy="1609" r="22"/></clipPath></defs>
<g clip-path="url(#ga2)"><rect x="2546" y="1587" width="44" height="44" fill="#2a2a2e"/>
<ellipse cx="2568" cy="1629.9" rx="17.6" ry="11.0" fill="#16161b"/>
<ellipse cx="2568" cy="1607.9" rx="7.04" ry="9.24" fill="#c09a86"/>
<path d="M2560.52,1605.7 Q2560.08,1595.36 2568,1595.8 Q2575.92,1595.36 2575.48,1605.7 Q2572.4,1599.76 2568,1599.76 Q2563.6,1599.76 2560.52,1605.7 Z" fill="#221a14"/>
</g><circle cx="2568" cy="1609" r="22" fill="none" stroke="#fff" stroke-width="1.5"/></svg>
<svg class="r" style="left:2518px;top:1585px" width="48" height="48" viewBox="2518 1585 48 48">
<defs><clipPath id="ga1"><circle cx="2542" cy="1609" r="22"/></clipPath></defs>
<g clip-path="url(#ga1)"><rect x="2520" y="1587" width="44" height="44" fill="#dcdcdc"/>
<ellipse cx="2542" cy="1629.9" rx="17.6" ry="11.0" fill="#1a1a1e"/>
<ellipse cx="2542" cy="1607.9" rx="7.04" ry="9.24" fill="#e0b9a0"/>
<path d="M2534.52,1605.7 Q2534.08,1595.36 2542,1595.8 Q2549.92,1595.36 2549.48,1605.7 Q2546.4,1599.76 2542,1599.76 Q2537.6,1599.76 2534.52,1605.7 Z" fill="#5a3a28"/>
</g><circle cx="2542" cy="1609" r="22" fill="none" stroke="#fff" stroke-width="1.5"/></svg>
<svg class="r" style="left:2615px;top:1592px" width="34" height="34" viewBox="2615 1592 34 34"><circle cx="2632" cy="1609" r="15" fill="#312a84"/><circle cx="2632" cy="1601.5" r="2.2" fill="#fff"/><rect x="2630" y="1605" width="4" height="11" rx="1" fill="#fff"/></svg>
<svg class="r" style="left:573px;top:1705.5px" width="64" height="64" viewBox="573 1705.5 64 64">
<defs><clipPath id="al"><circle cx="605" cy="1737.5" r="30"/></clipPath></defs>
<g clip-path="url(#al)"><rect x="575" y="1707.5" width="60" height="60" fill="#dedede"/>
<ellipse cx="605" cy="1766.0" rx="24.0" ry="15.0" fill="#1b1b20"/>
<ellipse cx="605" cy="1736.0" rx="9.6" ry="12.6" fill="#e3bda6"/>
<path d="M594.8,1733.0 Q594.2,1718.9 605,1719.5 Q615.8,1718.9 615.2,1733.0 Q611.0,1724.9 605,1724.9 Q599.0,1724.9 594.8,1733.0 Z" fill="#4a3020"/>
</g></svg>
<div class="t" style="left:658.0px;top:1712.9px;font-size:20.71px;color:#1f2937;font-weight:bold;letter-spacing:-0.05px;">Alice</div>
<div class="t" style="left:721.0px;top:1714.1px;font-size:19.29px;color:#94a0b4;letter-spacing:-0.16px;">8/10/24, 2:30 PM</div>
<div class="t" style="left:658.0px;top:1776.2px;font-size:22.86px;color:#4b5563;letter-spacing:-0.42px;">Hi there!</div>
<div class="r" style="left:576.0px;top:1816.5px;width:2064.0px;height:1.5px;background:#f0f2f5;"></div>
<svg class="r" style="left:573px;top:1829px" width="64" height="64" viewBox="573 1829 64 64">
<defs><clipPath id="bo"><circle cx="605" cy="1861" r="30"/></clipPath></defs>
<g clip-path="url(#bo)"><rect x="575" y="1831" width="60" height="60" fill="#17171b"/>
<ellipse cx="605" cy="1889.5" rx="24.0" ry="15.0" fill="#1d2533"/>
<ellipse cx="605" cy="1859.5" rx="9.6" ry="12.6" fill="#c9a08a"/>
<path d="M594.8,1856.5 Q594.2,1842.4 605,1843.0 Q615.8,1842.4 615.2,1856.5 Q611.0,1848.4 605,1848.4 Q599.0,1848.4 594.8,1856.5 Z" fill="#1b1612"/>
</g></svg>
<div class="t" style="left:660.0px;top:1835.4px;font-size:20.71px;color:#1f2937;font-weight:bold;letter-spacing:-0.63px;">Bob</div>
<div class="t" style="left:711.0px;top:1836.6px;font-size:19.29px;color:#94a0b4;letter-spacing:-0.19px;">8/10/24, 2:35 PM</div>
<div class="t" style="left:660.0px;top:1898.6px;font-size:22.86px;color:#4b5563;letter-spacing:-0.59px;">Hello!</div>
<div class="r" style="left:576.0px;top:1937.0px;width:2064.0px;height:1.5px;background:#f0f2f5;"></div>
<div class="r" style="left:1168.0px;top:1952.0px;width:878.0px;height:59.0px;background:#e0e7ff;border-radius:4px;"></div>
<div class="t" style="left:1280.0px;top:1973.0px;font-size:23.57px;color:#312e81;font-weight:bold;letter-spacing:-1.04px;">The rate is confirmed, and booking is requested</div>
<div class="t" style="left:1886.0px;top:1972.5px;font-size:18.23px;color:#6b7280;-webkit-text-stroke:0.3px #6b7280;letter-spacing:0.61px;">8/10/24, 3:00 PM</div>
<div class="r" style="left:773.6px;top:2075.0px;width:1556.4px;height:81.0px;background:#fff;border:2px solid #e6e9ef;border-radius:10px;box-sizing:border-box;"></div>
<div class="t" style="left:800.0px;top:2104.4px;font-size:24.29px;color:#9ca3af;letter-spacing:0.60px;">Type a message</div>
<div class="r" style="left:2320.0px;top:2072.0px;width:119.0px;height:85.0px;background:#30297f;border-radius:0 9px 9px 0;"></div>
<div class="t" style="left:2351.0px;top:2104.4px;font-size:24.29px;color:#ffffff;font-weight:bold;letter-spacing:-0.46px;">Send</div>
</body></html>
